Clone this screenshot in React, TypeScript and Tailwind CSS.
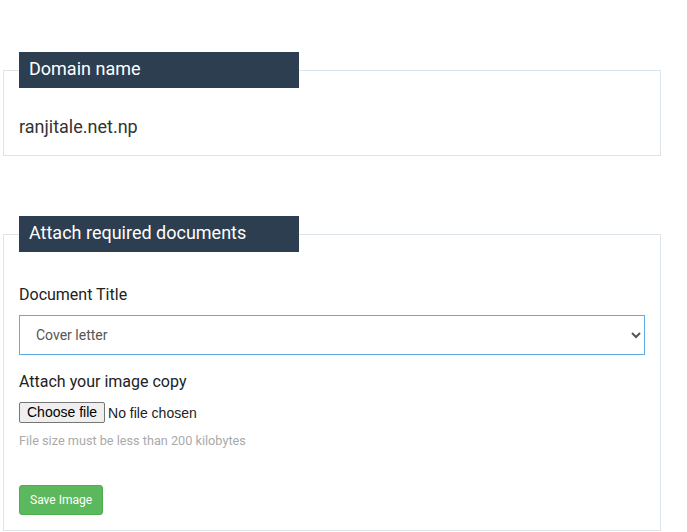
import React, { useState } from 'react';

const App: React.FC = () => {
  const [fileName, setFileName] = useState('');

  return (
    <div className="min-h-[532px] w-[687px] bg-white font-['Roboto',sans-serif] text-[#222]">
      <div className="ml-[3px] w-[658px] pt-[52px]">
        {/* Domain name */}
        <fieldset className="border border-[#dce4ec] px-[15px] pb-[15px]">
          <legend className="w-[280px] h-[36px] bg-[#2c3e50] pl-[10px] text-[18px] leading-[34px] text-white">
            Domain name
          </legend>
          <div className="pt-[25px] text-[18px] leading-[27px] text-[#333]">ranjitale.net.np</div>
        </fieldset>

        {/* Attach documents */}
        <fieldset className="mt-[60px] border border-[#dce4ec] px-[15px] pb-[15px]">
          <legend className="w-[280px] h-[36px] bg-[#2c3e50] pl-[10px] text-[18px] leading-[34px] text-white">
            Attach required documents
          </legend>
          <div className="pt-[31px]">
            <label className="block text-[16px] leading-[24px] mb-[8px]">Document Title</label>
            <select className="block w-full h-[40px] border border-[#5dade2] pl-[12px] pr-[8px] text-[14px] text-[#555] bg-white outline-none">
              <option>Cover letter</option>
              <option>Citizenship</option>
              <option>Company registration</option>
            </select>
          </div>
          <div className="mt-[15px]">
            <label className="block text-[16px] leading-[24px] mb-[8px]">Attach your image copy</label>
            <label className="flex items-center gap-[3px] font-['Liberation_Sans',Arial,sans-serif] text-[14px] leading-[20px] text-[#222] cursor-pointer">
              <span className="h-[21px] px-[7px] border border-[#767676] rounded-[2px] bg-[#efefef] text-black leading-[19px]">
                Choose file
              </span>
              <span>{fileName || 'No file chosen'}</span>
              <input
                type="file"
                className="hidden"
                onChange={(e) => setFileName(e.target.files?.[0]?.name ?? '')}
              />
            </label>
            <p className="mt-[9px] text-[12.7px] leading-[18px] text-[#aaa]">
              File size must be less than 200 kilobytes
            </p>
          </div>
          <button className="mt-[35px] h-[30px] px-[10px] rounded-[3px] border border-[#4cae4c] bg-[#5cb85c] text-[12px] text-white">
            Save Image
          </button>
        </fieldset>
      </div>
    </div>
  );
};

export default App;
